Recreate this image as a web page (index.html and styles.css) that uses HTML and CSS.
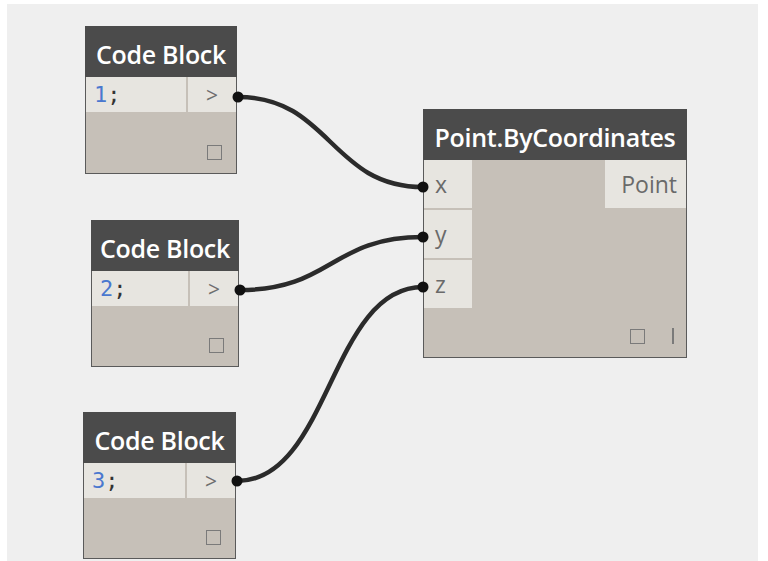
FILE: index.html
```html
<!DOCTYPE html>
<html>
<head>
<meta charset="utf-8">
<link rel="stylesheet" href="styles.css">
</head>
<body>
<div class="canvas">
  <div class="node n1">
    <div class="head">Code Block</div>
    <div class="body">
      <div class="io">
        <div class="code"><span class="num">1</span>;</div>
        <div class="out">&gt;</div>
      </div>
      <div class="foot"><span class="box"></span></div>
    </div>
  </div>
  <div class="node n2">
    <div class="head">Code Block</div>
    <div class="body">
      <div class="io">
        <div class="code"><span class="num">2</span>;</div>
        <div class="out">&gt;</div>
      </div>
      <div class="foot"><span class="box"></span></div>
    </div>
  </div>
  <div class="node n3">
    <div class="head">Code Block</div>
    <div class="body">
      <div class="io">
        <div class="code"><span class="num">3</span>;</div>
        <div class="out">&gt;</div>
      </div>
      <div class="foot"><span class="box"></span></div>
    </div>
  </div>
  <div class="node n4">
    <div class="head">Point.ByCoordinates</div>
    <div class="body">
      <div class="ports">
        <div class="ins">
          <div class="port">x</div>
          <div class="port">y</div>
          <div class="port">z</div>
        </div>
        <div class="outs">
          <div class="oport">Point</div>
        </div>
      </div>
      <div class="foot"><span class="box"></span><span class="bar"></span></div>
    </div>
  </div>
  <svg class="wires" width="751" height="557" viewBox="0 0 751 557">
    <g fill="none" stroke="#2b2b2b" stroke-width="4.5" stroke-linecap="round">
      <path d="M231,93 C323,93 324,183 416,183"/>
      <path d="M233,286 C325,286 324,233 416,233"/>
      <path d="M230,477 C323,477 323,283 416,283"/>
    </g>
    <g fill="#111">
      <circle cx="231" cy="93" r="5.5"/>
      <circle cx="233" cy="286" r="5.5"/>
      <circle cx="230" cy="477" r="5.5"/>
      <circle cx="416" cy="183" r="5.5"/>
      <circle cx="416" cy="233" r="5.5"/>
      <circle cx="416" cy="283" r="5.5"/>
    </g>
  </svg>
</div>
</body>
</html>
```
FILE: styles.css
```css
html, body {
  margin: 0;
  padding: 0;
  background: #ffffff;
}
body {
  font-family: "Open Sans", "Noto Sans", sans-serif;
}
.canvas {
  position: relative;
  margin: 4px 10px 0 7px;
  width: 751px;
  height: 557px;
  background: #efefef;
  overflow: hidden;
}
.node {
  position: absolute;
  display: flex;
  flex-direction: column;
  box-sizing: border-box;
}
.n1 { left: 78px; top: 22px; width: 152px; height: 148px; }
.n2 { left: 84px; top: 216px; width: 148px; height: 147px; }
.n3 { left: 76px; top: 408px; width: 153px; height: 147px; }
.n4 { left: 416px; top: 105px; width: 264px; height: 249px; }
.head {
  height: 51px;
  flex: none;
  background: #4b4b4b;
  color: #ffffff;
  font-weight: 600;
  font-size: 25px;
  letter-spacing: -0.3px;
  display: flex;
  align-items: center;
  justify-content: center;
  padding-top: 4px;
  box-sizing: border-box;
  white-space: nowrap;
}
.body {
  flex: 1;
  display: flex;
  flex-direction: column;
  background: #c6c0b8;
  border: 1px solid #5a5a5a;
  border-top: none;
}
.io {
  display: flex;
  height: 35px;
  gap: 2px;
}
.code {
  flex: 1;
  background: #e7e5e0;
  font-family: "DejaVu Sans Mono", monospace;
  font-size: 22px;
  color: #333;
  padding-left: 8px;
  display: flex;
  align-items: center;
}
.num { color: #4a78cf; }
.out {
  width: 48px;
  background: #e7e5e0;
  color: #6e6e6e;
  font-size: 21px;
  display: flex;
  align-items: center;
  justify-content: center;
}
.foot {
  margin-top: auto;
  display: flex;
  justify-content: flex-end;
  align-items: center;
  gap: 27px;
  padding: 0 14px 13px 0;
}
.box {
  width: 13px;
  height: 13px;
  border: 1.5px solid #7a7a7a;
}
.bar {
  width: 2px;
  height: 16px;
  background: #7a7a7a;
}
.n4 .foot { padding-right: 12px; }
.ports {
  display: flex;
  justify-content: space-between;
}
.ins {
  display: flex;
  flex-direction: column;
  gap: 2px;
}
.port {
  width: 48px;
  height: 48px;
  box-sizing: border-box;
  background: #e7e5e0;
  color: #6a6a6a;
  font-size: 23px;
  padding-left: 11px;
  display: flex;
  align-items: center;
}
.oport {
  width: 81px;
  height: 48px;
  box-sizing: border-box;
  background: #e7e5e0;
  color: #6a6a6a;
  font-size: 23px;
  padding-right: 9px;
  display: flex;
  align-items: center;
  justify-content: flex-end;
}
.wires {
  position: absolute;
  left: 0;
  top: 0;
}
```
